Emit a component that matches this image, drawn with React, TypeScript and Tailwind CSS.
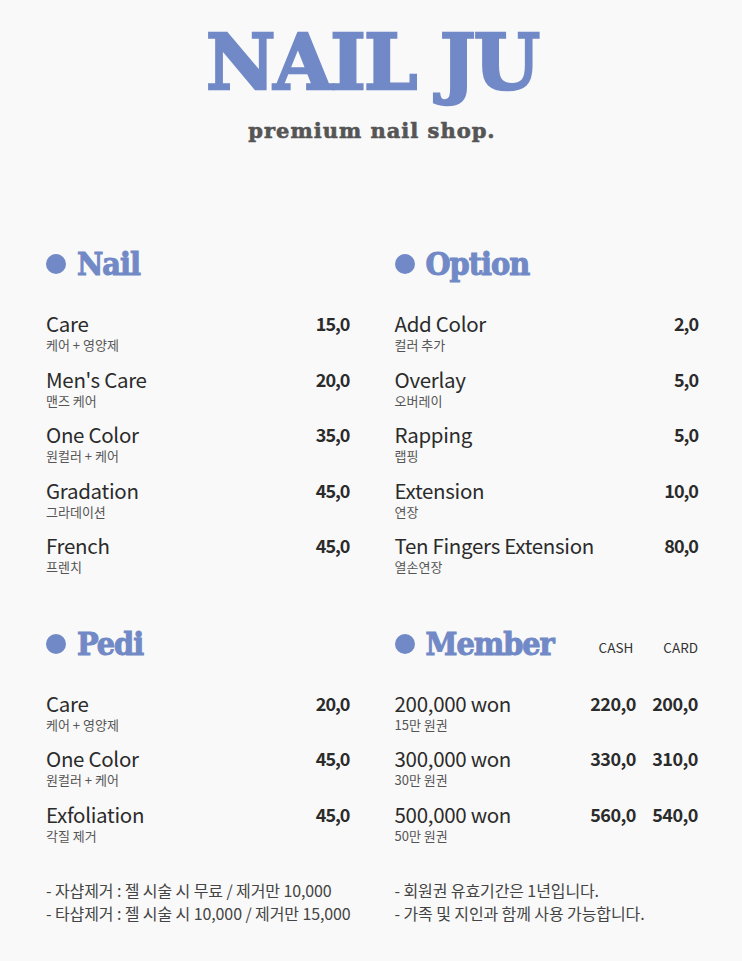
const items = {
  nail: [
    ["Care", "케어 + 영양제", "15,0"],
    ["Men's Care", "맨즈 케어", "20,0"],
    ["One Color", "원컬러 + 케어", "35,0"],
    ["Gradation", "그라데이션", "45,0"],
    ["French", "프렌치", "45,0"],
  ],
  option: [
    ["Add Color", "컬러 추가", "2,0"],
    ["Overlay", "오버레이", "5,0"],
    ["Rapping", "랩핑", "5,0"],
    ["Extension", "연장", "10,0"],
    ["Ten Fingers Extension", "열손연장", "80,0"],
  ],
  pedi: [
    ["Care", "케어 + 영양제", "20,0"],
    ["One Color", "원컬러 + 케어", "45,0"],
    ["Exfoliation", "각질 제거", "45,0"],
  ],
};

const members = [
  ["200,000 won", "15만 원권", "220,0", "200,0"],
  ["300,000 won", "30만 원권", "330,0", "310,0"],
  ["500,000 won", "50만 원권", "560,0", "540,0"],
];

function Heading({ title, children }: { title: string; children?: React.ReactNode }) {
  return (
    <div className="flex h-[40px] items-center">
      <span className="mr-[11px] h-[20px] w-[20px] rounded-full bg-[#7189c6]" />
      <h2 className="font-['DejaVu_Serif_Condensed','DejaVu_Serif',serif] text-[32px] font-bold leading-none tracking-[-1px] text-[#7189c6] [-webkit-text-stroke:1px_#7189c6]">
        {title}
      </h2>
      {children}
    </div>
  );
}

function Name({ name, sub }: { name: string; sub: string }) {
  return (
    <div className="flex flex-col">
      <p className="text-[20.5px] leading-[24px] tracking-[-0.3px] text-[#2b2b2b]">{name}</p>
      <p className="mt-[2px] text-[13px] leading-[16px] text-[#555]">{sub}</p>
    </div>
  );
}

function Row({ name, sub, price }: { name: string; sub: string; price: string }) {
  return (
    <div className="flex h-[55.5px] items-start justify-between">
      <Name name={name} sub={sub} />
      <p className="text-[18px] font-bold leading-[24px] tracking-[-1px] text-[#2b2b2b]">{price}</p>
    </div>
  );
}

export default function App() {
  return (
    <main className="min-h-[961px] w-[742px] bg-[#f9f9f9] pl-[46px] pr-[44px] font-['Noto_Sans_CJK_KR','Noto_Sans',sans-serif]">
      <header className="flex flex-col items-center pt-[24px]">
        <h1 className="font-['DejaVu_Serif',serif] text-[76px] font-bold leading-[78px] tracking-[-2px] text-[#7189c6] [-webkit-text-stroke:2.5px_#7189c6]">
          NAIL JU
        </h1>
        <p className="mt-[16px] font-['DejaVu_Serif',serif] text-[21px] font-bold leading-[26px] tracking-[1px] text-[#555] [-webkit-text-stroke:0.6px_#555]">
          premium nail shop.
        </p>
      </header>

      <div className="mt-[100px] grid grid-cols-2 gap-x-[45px]">
        <section>
          <Heading title="Nail" />
          <div className="mt-[27px]">
            {items.nail.map(([n, s, p]) => (
              <Row key={n} name={n} sub={s} price={p} />
            ))}
          </div>
        </section>
        <section>
          <Heading title="Option" />
          <div className="mt-[27px]">
            {items.option.map(([n, s, p]) => (
              <Row key={n} name={n} sub={s} price={p} />
            ))}
          </div>
        </section>

        <section className="mt-[35px]">
          <Heading title="Pedi" />
          <div className="mt-[27px]">
            {items.pedi.map(([n, s, p]) => (
              <Row key={n + s} name={n} sub={s} price={p} />
            ))}
          </div>
        </section>
        <section className="mt-[35px]">
          <Heading title="Member">
            <div className="ml-auto flex gap-[30px] pt-[8px] text-[13.5px] text-[#333]">
              <span>CASH</span>
              <span>CARD</span>
            </div>
          </Heading>
          <div className="mt-[27px]">
            {members.map(([n, s, a, b]) => (
              <div key={n} className="flex h-[55.5px] items-start justify-between">
                <Name name={n} sub={s} />
                <div className="flex gap-[10px] text-[18px] font-bold leading-[24px] tracking-[-0.5px] text-[#2b2b2b]">
                  <span className="w-[52px] text-right">{a}</span>
                  <span className="w-[52px] text-right">{b}</span>
                </div>
              </div>
            ))}
          </div>
        </section>

        <ul className="mt-[22px] whitespace-nowrap text-[16px] leading-[23px] tracking-[-0.1px] text-[#444]">
          <li>- 자샵제거 : 젤 시술 시 무료 / 제거만 10,000</li>
          <li>- 타샵제거 : 젤 시술 시 10,000 / 제거만 15,000</li>
        </ul>
        <ul className="mt-[22px] whitespace-nowrap text-[16px] leading-[23px] tracking-[-0.1px] text-[#444]">
          <li>- 회원권 유효기간은 1년입니다.</li>
          <li>- 가족 및 지인과 함께 사용 가능합니다.</li>
        </ul>
      </div>
    </main>
  );
}
